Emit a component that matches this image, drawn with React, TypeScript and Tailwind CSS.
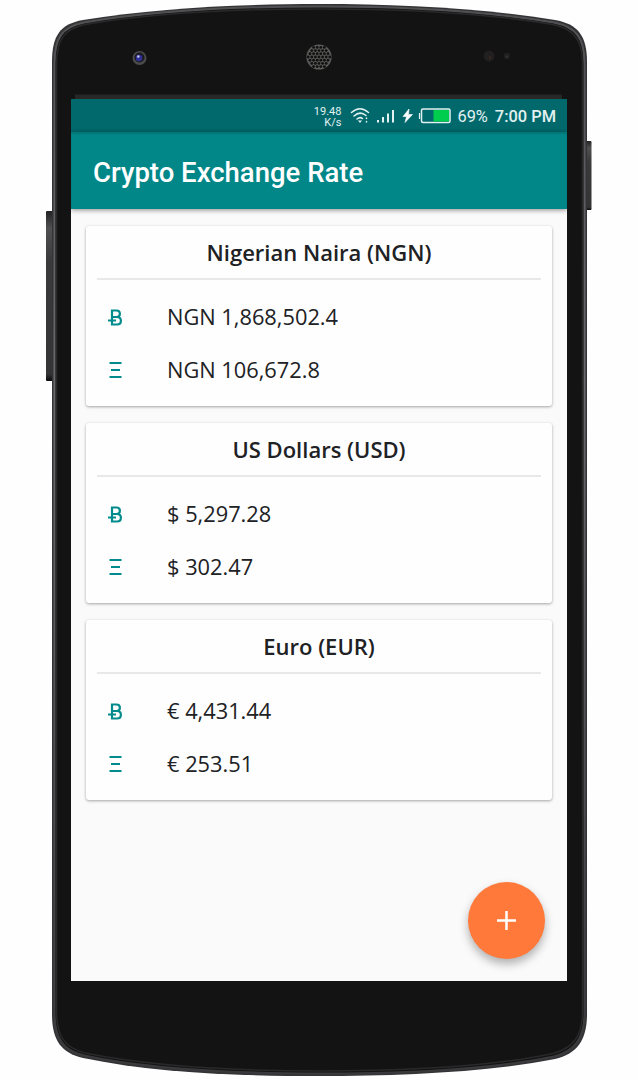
import React from "react";

type Rate = { title: string; btc: string; eth: string };

const rates: Rate[] = [
  { title: "Nigerian Naira (NGN)", btc: "NGN 1,868,502.4", eth: "NGN 106,672.8" },
  { title: "US Dollars (USD)", btc: "$ 5,297.28", eth: "$ 302.47" },
  { title: "Euro (EUR)", btc: "€ 4,431.44", eth: "€ 253.51" },
];

const holes: { x: number; y: number }[] = [];
for (let r = -3; r <= 3; r++) {
  for (let c = -4; c <= 4; c++) {
    const x = c * 3.6 + (r % 2 ? 1.8 : 0);
    const y = r * 3.2;
    if (x * x + y * y < 128) holes.push({ x: 319 + x, y: 57 + y });
  }
}

function PhoneFrame() {
  return (
    <svg className="absolute inset-0" width="638" height="1080" viewBox="0 0 638 1080">
      <defs>
        <linearGradient id="key" x1="0" y1="0" x2="0" y2="1">
          <stop offset="0" stopColor="#222" />
          <stop offset="0.1" stopColor="#505050" />
          <stop offset="0.3" stopColor="#3a3a3a" />
          <stop offset="0.96" stopColor="#343434" />
          <stop offset="1" stopColor="#080808" />
        </linearGradient>
        <linearGradient id="rim" x1="0" y1="0" x2="0" y2="1">
          <stop offset="0" stopColor="#505052" />
          <stop offset="0.35" stopColor="#6a6a6c" />
          <stop offset="0.7" stopColor="#505052" />
          <stop offset="1" stopColor="#39393b" />
        </linearGradient>
      </defs>
      <rect x="46" y="211" width="7" height="170" rx="1" fill="url(#key)" />
      <rect x="585" y="141" width="6.500" height="69" rx="1" fill="url(#key)" />
      <path
        d="M52 62C52 36 60 24 83 20C155 8 240 4 319 4C398 4 483 8 555 20C578 24 587 36 587 62V1014C587 1040 577 1054 555 1059C490 1072 398 1076 319 1076C240 1076 155 1073 83 1058C61 1053 52 1040 52 1014Z"
        fill="#343436"
      />
      <path
        d="M54.500 63C54.500 38 62 27 84 22.500C155 10.500 240 6.500 319 6.500C398 6.500 483 10.500 554 22.500C576 27 584.500 38 584.500 63V1013C584.500 1038 575 1051 554 1056.500C490 1069.500 398 1073.500 319 1073.500C240 1073.500 155 1070.500 84 1055.500C63 1051 54.500 1038 54.500 1013Z"
        fill="#131313"
        stroke="url(#rim)"
        strokeWidth="2"
      />
      <path
        d="M56.500 64C56.500 40 64 29 85 24.500C155 12.500 240 9 319 9C398 9 483 12.500 553 24.500C574 29 582.500 40 582.500 64V1012C582.500 1036 573 1048 553 1053.500C490 1067 398 1071 319 1071C240 1071 155 1067 85 1053C65 1048 56.500 1036 56.500 1012Z"
        fill="#131313"
        stroke="#29292a"
        strokeWidth="1.500"
      />
      <rect x="75" y="94.500" width="487" height="5" fill="#282727" />
      <circle cx="139.500" cy="58" r="7" fill="#4b4b4c" />
      <circle cx="139.500" cy="57.500" r="5" fill="#1d1c22" />
      <circle cx="139" cy="58" r="3.200" fill="#30309a" />
      <circle cx="138.300" cy="56.500" r="1.200" fill="#c9c9ec" />
      <circle cx="319" cy="57" r="12.600" fill="#5b5b5a" />
      {holes.map((h, i) => (
        <circle key={i} cx={h.x} cy={h.y} r="1.450" fill="#111" />
      ))}
      <circle cx="489" cy="56" r="5.500" fill="#211f1f" />
      <path d="M490 56v3" stroke="#513016" />
      <circle cx="507" cy="56" r="3.200" fill="#202020" />
      <circle cx="507" cy="56.500" r="1" fill="#393939" />
    </svg>
  );
}

function StatusIcons() {
  return (
    <svg width="104" height="18" viewBox="0 0 104 18" fill="none" className="shrink-0">
      <g stroke="#e3f1f1" strokeWidth="1.500" strokeLinecap="round">
        <path d="M1.500 5.500Q10-2 18.500 5.500M4 9Q10 3.500 16 8.500M7 12Q10 9.500 12.500 11.500" />
        <path d="M16.500 11v.5M16.500 14.500v.5" />
      </g>
      <path d="M8 13.500h4L10 16z" fill="#e3f1f1" />
      <path d="M28 13v2.500M33 10v5.500M38 6.500v9M43 3v12.500" stroke="#e3f1f1" strokeWidth="2" />
      <path d="M59 2L53 9.500H56.500L55 15.500L62.500 7.500H58.500Z" fill="#fff" stroke="#fff" strokeWidth=".6" />
      <rect x="71.500" y="2" width="28.500" height="13.500" rx="1.500" stroke="#e3f1f1" strokeWidth="1.500" />
      <path d="M69.500 6v6" stroke="#e3f1f1" strokeWidth="1.200" />
      <path d="M83.500 3H99V14.500H83.500Z" fill="#00cc4e" />
    </svg>
  );
}

function BitcoinIcon() {
  return (
    <svg width="14" height="17" viewBox="0 0 14 17" fill="none" stroke="#028b8c" strokeWidth="2.200">
      <path d="M4 1.500H8.500C13 1.500 13 8 8.500 8H4M4 8H9C14.200 8 14.200 15.500 9 15.500H3M4 .5V16.500M0 11.500H8" />
    </svg>
  );
}

function EtherIcon() {
  return (
    <svg width="14" height="17" viewBox="0 0 14 17" stroke="#028b8c" strokeWidth="2">
      <path d="M1.500 1H13.500M3 8H12M1.500 15H13.500" />
    </svg>
  );
}

function RateCard({ title, btc, eth }: Rate) {
  return (
    <section className="h-[180px] rounded-[3px] bg-[#fefefe] px-[11px] shadow-[0_1px_3px_rgba(0,0,0,0.35)]">
      <h2 className="flex h-[54px] items-center justify-center border-b-2 border-[#e8e8e8] text-[22px] font-semibold">
        {title}
      </h2>
      <div className="flex flex-col pt-[11px] text-[21.8px]">
        <div className="flex h-[53px] items-center pl-[11px]">
          <span className="flex w-[59px]"><BitcoinIcon /></span>
          <span>{btc}</span>
        </div>
        <div className="flex h-[53px] items-center pl-[11px]">
          <span className="flex w-[59px]"><EtherIcon /></span>
          <span>{eth}</span>
        </div>
      </div>
    </section>
  );
}

export default function App() {
  return (
    <div className="relative h-[1080px] w-[638px] overflow-hidden bg-[#fefefe] pl-[71px] pt-[99px] font-['Open_Sans',sans-serif] text-[#202124]">
      <PhoneFrame />
      <main className="relative flex h-[882px] w-[496px] flex-col overflow-hidden bg-[#fafafb]">
        <div className="flex h-[33px] shrink-0 items-center justify-end bg-[#01696c] pr-[11px] font-[Roboto,sans-serif] text-[#e3f1f1]">
          <div className="mr-[9px] pt-[2px] text-right text-[11px] leading-[11px]">
            19.48
            <br />
            K/s
          </div>
          <StatusIcons />
          <span className="ml-[3px] pt-[3px] text-[16.400px]">69%</span>
          <span className="ml-[7px] pt-[3px] text-[16.400px] font-medium">7:00 PM</span>
        </div>
        <header className="z-10 flex h-[77px] shrink-0 items-center bg-[#028789] pl-[22px] pt-[5px] font-[Roboto,sans-serif] text-[27.500px] font-medium text-white shadow-[inset_0_2px_2px_rgba(0,80,80,0.3),0_1px_5px_rgba(0,0,0,0.45)]">
          Crypto Exchange Rate
        </header>
        <div className="flex flex-col gap-[17px] px-[15px] pt-[17px]">
          {rates.map((r) => (
            <RateCard key={r.title} {...r} />
          ))}
        </div>
        <button
          aria-label="Add currency"
          className="absolute bottom-[22px] right-[22px] flex size-[77px] items-center justify-center rounded-full bg-[#ff793b] shadow-[0_5px_10px_rgba(0,0,0,0.3)]"
        >
          <svg width="19" height="19" viewBox="0 0 19 19" stroke="white" strokeWidth="2.500" className="mb-px mr-px">
            <path d="M9.500 0V19M0 9.500H19" />
          </svg>
        </button>
      </main>
    </div>
  );
}
